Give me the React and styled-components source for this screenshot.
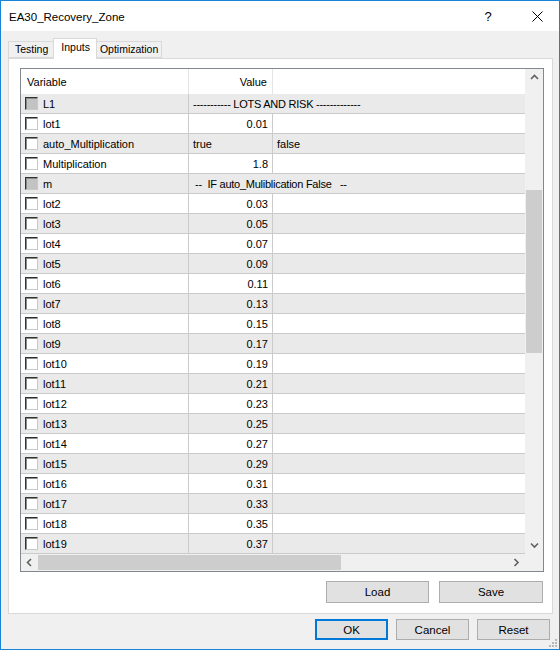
import React from 'react';
import styled, { createGlobalStyle } from 'styled-components';

const GlobalStyle = createGlobalStyle`
  html, body {
    margin: 0;
    padding: 0;
    background: #ffffff;
  }
  * {
    box-sizing: border-box;
  }
`;

const Window = styled.div`
  position: relative;
  width: 560px;
  height: 650px;
  border: 1px solid #1883d7;
  background: #f0f0f0;
  display: flex;
  flex-direction: column;
  font-family: 'Liberation Sans', Arial, sans-serif;
  font-size: 11px;
  color: #000;
`;

const TitleBar = styled.div`
  height: 30px;
  background: #fff;
  display: flex;
  align-items: center;
  padding: 0 0 0 8px;
  font-size: 11.5px;
`;

const Title = styled.div`
  flex: 1;
  padding-top: 1px;
`;

const Help = styled.div`
  width: 12px;
  font-size: 13px;
  margin-right: 38px;
  text-align: center;
`;

const Close = styled.div`
  width: 11px;
  height: 11px;
  margin-right: 16px;
  display: flex;
`;

const Body = styled.div`
  flex: 1;
  padding: 7px 6px 0 7px;
  display: flex;
  flex-direction: column;
`;

const TabStrip = styled.div`
  display: flex;
  align-items: flex-end;
  height: 20px;
  position: relative;
  z-index: 1;
  font-size: 10.5px;
`;

const Tab = styled.div`
  height: ${(p) => (p.$active ? '21px' : '17px')};
  margin: 0 ${(p) => (p.$active ? '-1px' : '0')};
  margin-bottom: ${(p) => (p.$active ? '-1px' : '0')};
  padding: ${(p) => p.$pad};
  background: ${(p) => (p.$active ? '#fff' : '#f0f0f0')};
  border: 1px solid #d9d9d9;
  border-bottom: ${(p) => (p.$active ? 'none' : '1px solid #d9d9d9')};
  border-left: ${(p) => (p.$first || p.$active ? '1px solid #d9d9d9' : 'none')};
  position: relative;
  z-index: ${(p) => (p.$active ? 2 : 1)};
  white-space: nowrap;
`;

const Panel = styled.div`
  background: #fff;
  border: 1px solid #d9d9d9;
  padding: 9px 8px 10px 11px;
  display: flex;
  flex-direction: column;
`;

const GridBox = styled.div`
  width: 524px;
  height: 504px;
  border: 1px solid #828790;
  display: flex;
  flex-direction: column;
`;

const Upper = styled.div`
  display: flex;
  height: 485px;
`;

const DataCol = styled.div`
  width: 504px;
  display: flex;
  flex-direction: column;
  overflow: hidden;
`;

const HeaderRow = styled.div`
  display: grid;
  grid-template-columns: 168px 84px 1fr;
  height: 25px;
  background: #fff;
`;

const HeaderCell = styled.div`
  display: flex;
  align-items: center;
  justify-content: ${(p) => (p.$right ? 'flex-end' : 'flex-start')};
  padding: ${(p) => (p.$right ? '0 5px 0 0' : '0 0 0 6px')};
  border-right: ${(p) => (p.$last ? 'none' : '1px solid #e5e5e5')};
`;

const Row = styled.div`
  display: grid;
  grid-template-columns: ${(p) => (p.$section ? '168px 1fr' : '168px 84px 1fr')};
  height: 20px;
  background: ${(p) => (p.$odd ? '#ffffff' : '#eaeaea')};
  border-bottom: 1px solid #cbcbcb;
`;

const Cell = styled.div`
  display: flex;
  align-items: center;
  white-space: pre;
  overflow: visible;
  justify-content: ${(p) => (p.$right ? 'flex-end' : 'flex-start')};
  padding: ${(p) => p.$pad || '0 4px'};
  border-right: ${(p) => (p.$last ? 'none' : '1px solid #cbcbcb')};
`;

const SectionText = styled.span`
  letter-spacing: -0.25px;
`;

const Check = styled.span`
  width: 13px;
  height: 13px;
  margin-right: 5px;
  border-top: 1px solid #333;
  border-left: 1px solid #333;
  border-right: 1px solid #c8c8c8;
  border-bottom: 1px solid #c8c8c8;
  background: ${(p) => (p.$disabled ? '#c3c3c3' : '#fff')};
  box-shadow: inset 1px 1px 0 #8a8a8a;
  flex: none;
`;

const VScroll = styled.div`
  width: 18px;
  background: #f0f0f0;
  display: flex;
  flex-direction: column;
`;

const ArrowBox = styled.div`
  height: 17px;
  width: ${(p) => (p.$w ? `${p.$w}px` : '100%')};
  display: flex;
  align-items: center;
  justify-content: center;
  flex: none;
`;

const VTrack = styled.div`
  flex: 1;
  padding: 0 1px;
`;

const VThumb = styled.div`
  margin-top: 104px;
  height: 163px;
  background: #cdcdcd;
`;

const HScroll = styled.div`
  height: 17px;
  display: flex;
  background: #f0f0f0;
`;

const HTrack = styled.div`
  flex: 1;
  display: flex;
  align-items: center;
`;

const HThumb = styled.div`
  width: 303px;
  height: 15px;
  background: #cdcdcd;
`;

const Corner = styled.div`
  width: 18px;
  background: #f0f0f0;
`;

const ButtonRow = styled.div`
  display: flex;
  justify-content: flex-end;
  gap: ${(p) => p.$gap || 8}px;
  margin-top: ${(p) => p.$top || 0}px;
  padding-right: ${(p) => p.$right || 0}px;
`;

const Button = styled.div`
  width: ${(p) => p.$w}px;
  height: ${(p) => p.$h || 21}px;
  background: #e1e1e1;
  border: ${(p) => (p.$default ? '2px solid #0078d7' : '1px solid #adadad')};
  display: flex;
  align-items: center;
  justify-content: center;
  font-size: 11.5px;
`;

const Grip = styled.div`
  position: absolute;
  right: 1px;
  bottom: 1px;
  width: 10px;
  height: 10px;
  display: flex;
`;

const Chevron = ({ dir }) => {
  const paths = {
    up: 'M1 5 L4.5 1.5 L8 5',
    down: 'M1 1.5 L4.5 5 L8 1.5',
    left: 'M5 1 L1.5 4.5 L5 8',
    right: 'M1.5 1 L5 4.5 L1.5 8',
  };
  const vertical = dir === 'up' || dir === 'down';
  return (
    <svg width={vertical ? 9 : 7} height={vertical ? 7 : 9} viewBox={vertical ? '0 0 9 7' : '0 0 7 9'}>
      <path d={paths[dir]} fill="none" stroke="#606060" strokeWidth="1.6" />
    </svg>
  );
};

const rows = [
  { name: 'L1', section: '----------- LOTS AND RISK -------------', pad: '0 4px' },
  { name: 'lot1', value: '0.01' },
  { name: 'auto_Multiplication', value: 'true', extra: 'false' },
  { name: 'Multiplication', value: '1.8' },
  { name: 'm', section: '--  IF auto_Muliblication False   --', pad: '0 6px' },
];
for (let i = 2; i <= 19; i += 1) {
  rows.push({ name: `lot${i}`, value: (0.03 + (i - 2) * 0.02).toFixed(2) });
}

const App = () => (
  <>
    <GlobalStyle />
    <Window>
      <TitleBar>
        <Title>EA30_Recovery_Zone</Title>
        <Help>?</Help>
        <Close>
          <svg width="11" height="11" viewBox="0 0 11 11">
            <path d="M0.5 0.5 L10.5 10.5 M10.5 0.5 L0.5 10.5" stroke="#000" strokeWidth="1" />
          </svg>
        </Close>
      </TitleBar>
      <Body>
        <TabStrip>
          <Tab $first $pad="1px 5px 0 6px">Testing</Tab>
          <Tab $active $pad="2px 6px 0 7px">Inputs</Tab>
          <Tab $pad="1px 3px 0 4px">Optimization</Tab>
        </TabStrip>
        <Panel>
          <GridBox>
            <Upper>
              <DataCol>
                <HeaderRow>
                  <HeaderCell>Variable</HeaderCell>
                  <HeaderCell $right>Value</HeaderCell>
                  <HeaderCell $last />
                </HeaderRow>
                {rows.map((r, i) => (
                  <Row key={r.name} $odd={i % 2 === 1} $section={!!r.section}>
                    <Cell>
                      <Check $disabled={!!r.section} />
                      {r.name}
                    </Cell>
                    {r.section ? (
                      <Cell $last $pad={r.pad}>
                        <SectionText>{r.section}</SectionText>
                      </Cell>
                    ) : (
                      <>
                        <Cell $right={r.value !== 'true'}>{r.value}</Cell>
                        <Cell $last>{r.extra || ''}</Cell>
                      </>
                    )}
                  </Row>
                ))}
              </DataCol>
              <VScroll>
                <ArrowBox>
                  <Chevron dir="up" />
                </ArrowBox>
                <VTrack>
                  <VThumb />
                </VTrack>
                <ArrowBox>
                  <Chevron dir="down" />
                </ArrowBox>
              </VScroll>
            </Upper>
            <HScroll>
              <ArrowBox $w={17}>
                <Chevron dir="left" />
              </ArrowBox>
              <HTrack>
                <HThumb />
              </HTrack>
              <ArrowBox $w={17}>
                <Chevron dir="right" />
              </ArrowBox>
              <Corner />
            </HScroll>
          </GridBox>
          <ButtonRow $gap={10} $top={9} $right={1}>
            <Button $w={103} $h={22}>Load</Button>
            <Button $w={104} $h={22}>Save</Button>
          </ButtonRow>
        </Panel>
        <ButtonRow $gap={8} $top={5} $right={3}>
          <Button $w={73} $default>OK</Button>
          <Button $w={73}>Cancel</Button>
          <Button $w={73}>Reset</Button>
        </ButtonRow>
      </Body>
      <Grip>
        <svg width="10" height="10" viewBox="0 0 10 10">
          {[
            [7, 1], [4, 4], [7, 4], [1, 7], [4, 7], [7, 7],
          ].map(([x, y]) => (
            <rect key={`${x}-${y}`} x={x} y={y} width="2" height="2" fill="#b8b8b8" />
          ))}
        </svg>
      </Grip>
    </Window>
  </>
);

export default App;
